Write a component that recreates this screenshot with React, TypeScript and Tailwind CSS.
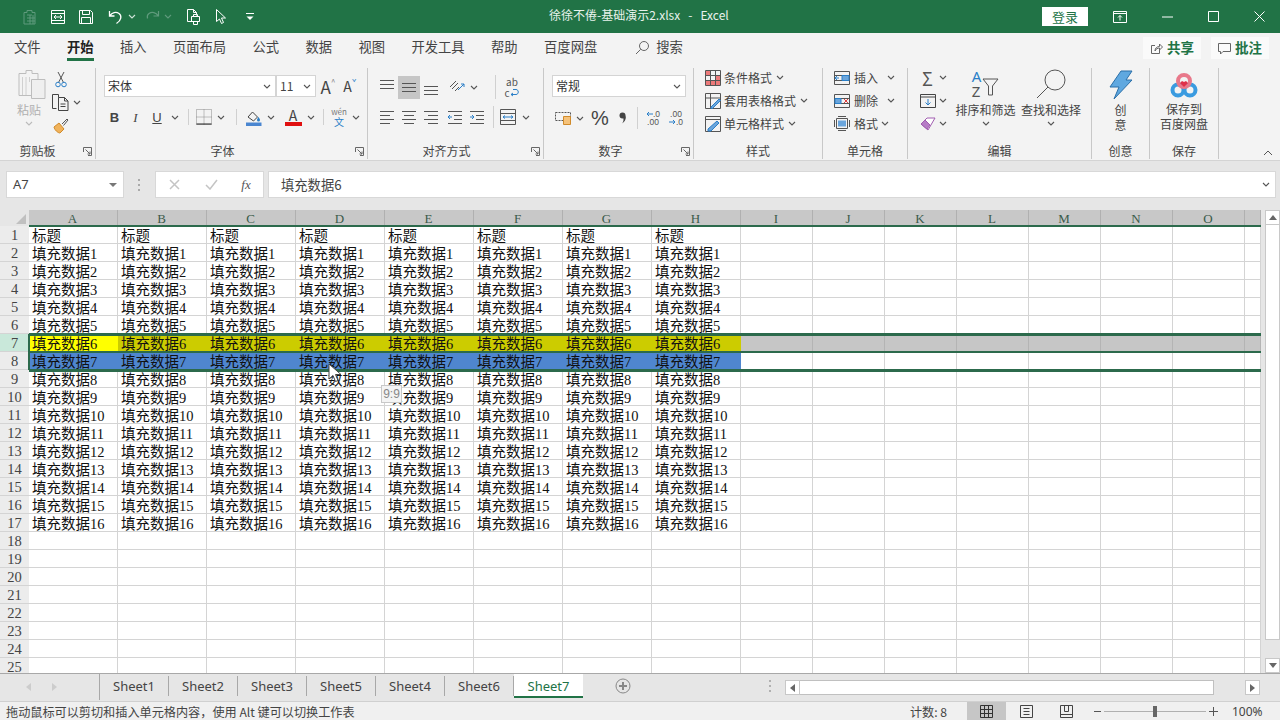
import React from "react";

const UI = { fontFamily: '"Noto Sans CJK SC","Noto Sans",sans-serif' };
const CELL = { fontFamily: '"Liberation Serif","Noto Sans CJK SC",serif' };

function Chev({ c = "#555" }: { c?: string }) {
  return (
    <svg width="8" height="5" viewBox="0 0 8 5" fill="none" stroke={c} strokeWidth="1.1">
      <path d="M1 1l3 3 3-3" />
    </svg>
  );
}

function Launcher() {
  return (
    <svg width="9" height="9" viewBox="0 0 9 9" fill="none" stroke="#666" strokeWidth="1">
      <path d="M.5 5V.5H8.5V8.5H5" />
      <path d="M2.5 2.5L7 7M7 4.5V7H4.5" />
    </svg>
  );
}

function Lines({ kind }: { kind: "top" | "mid" | "bot" | "l" | "c" | "r" | "in" | "out" }) {
  const y = kind === "top" ? [2, 6, 10] : kind === "mid" ? [5, 9, 13] : kind === "bot" ? [8, 12, 16] : [3, 7, 11, 15];
  const v = (i: number) => {
    if (kind === "l") return i % 2 ? [2, 12] : [2, 16];
    if (kind === "c") return i % 2 ? [4, 14] : [2, 16];
    if (kind === "r") return i % 2 ? [6, 16] : [2, 16];
    if (kind === "in" || kind === "out") return i === 1 || i === 2 ? [8, 16] : [2, 16];
    return [2, 16];
  };
  return (
    <svg width="18" height="18" viewBox="0 0 18 18" fill="none">
      {y.map((yy, i) => (
        <path key={yy} d={`M${v(i)[0]} ${yy + 0.5}H${v(i)[1]}`} stroke={"#555"} strokeWidth="1" />
      ))}
      {kind === "in" && <path d="M6 9H2M4 7L2 9l2 2" stroke="#2a7fc8" strokeWidth="1" />}
      {kind === "out" && <path d="M2 9h4M4 7l2 2-2 2" stroke="#2a7fc8" strokeWidth="1" />}
    </svg>
  );
}

function GroupLabel({ text, launcher, pr }: { text: string; launcher?: boolean; pr?: string }) {
  return (
    <div className={`relative h-[16px] flex items-center justify-center text-[12px] leading-none text-[#444] ${pr || ""}`}>
      <span>{text}</span>
      {launcher && (
        <span className="absolute right-[3px] top-[4px] flex">
          <Launcher />
        </span>
      )}
    </div>
  );
}

function Group({ w, children, label, launcher, pr }: { w: string; children: React.ReactNode; label: string; launcher?: boolean; pr?: string }) {
  return (
    <div className={`${w} shrink-0 flex flex-col border-r border-[#c8c8c8] mt-[3px] mb-[1px]`}>
      <div className="flex-1 flex min-h-0">{children}</div>
      <GroupLabel text={label} launcher={launcher} pr={pr} />
    </div>
  );
}

function Box({ w, children }: { w: string; children?: React.ReactNode }) {
  return <div className={`${w} shrink-0 h-full flex items-center justify-center`}>{children}</div>;
}

function Sep() {
  return <div className="w-px h-[16px] bg-[#d0d0d0] shrink-0" />;
}

function TitleBar() {
  return (
    <div className="h-[33px] shrink-0 bg-[#217346] flex items-center text-white relative">
      <div className="flex items-center h-full pl-[22px]">
        <Box w="w-[16px]">
          <svg width="16" height="16" viewBox="0 0 16 16" fill="none" stroke="#5f9a7c" strokeWidth="1">
            <path d="M2 3.5h3v-2h5v2h3V15H2zM5 6h5M5 9h8M5 12h8M8 6v9M11 6v9" />
          </svg>
        </Box>
        <div className="w-[12px]" />
        <Box w="w-[16px]">
          <svg width="16" height="16" viewBox="0 0 16 16" fill="none" stroke="#fff" strokeWidth="1">
            <path d="M1.5 1.5h13v13h-13zM1.5 4.5h13M1.5 11.5h13M4 8h8M4 8l2-2M4 8l2 2M12 8l-2-2M12 8l-2 2" />
          </svg>
        </Box>
        <div className="w-[12px]" />
        <Box w="w-[16px]">
          <svg width="16" height="16" viewBox="0 0 16 16" fill="none" stroke="#fff" strokeWidth="1">
            <path d="M1.5 1.5h11l2 2v11h-13zM4.5 1.5v4h7v-4M3.5 14.5v-6h9v6" />
          </svg>
        </Box>
        <div className="w-[14px]" />
        <Box w="w-[16px]">
          <svg width="16" height="16" viewBox="0 0 16 16" fill="none" stroke="#fff" strokeWidth="1.3">
            <path d="M1.5 2v5h5M1.8 6.8C4 3.5 8 2.5 11 4.5c3 2.2 2.5 6.500-2.500 10" />
          </svg>
        </Box>
        <Box w="w-[15px]">
          <Chev c="#cfe3d8" />
        </Box>
        <div className="w-[5px]" />
        <Box w="w-[16px]">
          <svg width="16" height="16" viewBox="0 0 16 16" fill="none" stroke="#5f9a7c" strokeWidth="1.2">
            <path d="M14.5 2v5h-5M14.2 6.8C12 3.5 8 2.5 5 4.5c-1.5 1-2 3-1.5 5" />
          </svg>
        </Box>
        <Box w="w-[15px]">
          <Chev c="#5f9a7c" />
        </Box>
        <div className="w-[10px]" />
        <Box w="w-[16px]">
          <svg width="16" height="18" viewBox="0 0 16 18" fill="none" stroke="#fff" strokeWidth="1">
            <path d="M8 13.5H2.5V1.5h6l3 3v3M8.5 1.5v3h3M6.5 8.5h8v5h-8zM8.5 8.5v-2h4v2M8.5 13.5v3h4v-3" />
          </svg>
        </Box>
        <div className="w-[12px]" />
        <Box w="w-[16px]">
          <svg width="14" height="18" viewBox="0 0 14 18" fill="none" stroke="#fff" strokeWidth="1">
            <path d="M2.5 1.5v12l3-2.5 2 4.5 2-1-2-4.5h4z" />
          </svg>
        </Box>
        <div className="w-[13px]" />
        <Box w="w-[16px]">
          <svg width="10" height="9" viewBox="0 0 10 9" fill="none" stroke="#fff" strokeWidth="1">
            <path d="M1 1.5h8" />
            <path d="M1.5 4.5h7L5 8z" fill="#fff" stroke="none" />
          </svg>
        </Box>
      </div>
      <div className="absolute left-[549px] top-[6px] text-[12px] leading-[18px] text-[#e8f2ec] whitespace-pre">徐徐不倦-基础演示2.xlsx   -   Excel</div>
      <div className="ml-auto flex items-center h-full">
        <div className="w-[46px] h-[19px] bg-white text-[#217346] text-[13px] leading-[19px] text-center">登录</div>
        <Box w="w-[22px]" />
        <Box w="w-[20px]">
          <svg width="14" height="12" viewBox="0 0 14 12" fill="none" stroke="#fff" strokeWidth="1">
            <path d="M.5 .5h13v11H.5zM.5 2.5h13M7 9.5V4.5M5 6.5l2-2 2 2" />
          </svg>
        </Box>
        <Box w="w-[27px]" />
        <Box w="w-[20px]">
          <svg width="11" height="2" viewBox="0 0 11 2" stroke="#fff"><path d="M0 1h11" /></svg>
        </Box>
        <Box w="w-[26px]" />
        <Box w="w-[20px]">
          <svg width="11" height="11" viewBox="0 0 11 11" fill="none" stroke="#fff"><path d="M.5 .5h10v10H.5z" /></svg>
        </Box>
        <Box w="w-[26px]" />
        <Box w="w-[20px]">
          <svg width="11" height="11" viewBox="0 0 11 11" fill="none" stroke="#fff"><path d="M.5 .5l10 10M10.5 .5l-10 10" /></svg>
        </Box>
        <div className="w-[11px]" />
      </div>
    </div>
  );
}

function TabsBar() {
  const tabs = ["文件", "开始", "插入", "页面布局", "公式", "数据", "视图", "开发工具", "帮助", "百度网盘"];
  return (
    <div className="h-[32px] shrink-0 flex items-start pl-[14px] text-[13.3px] text-[#444]">
      <div className="flex gap-[26.4px] h-[28px]">
        {tabs.map((t) => (
          <div key={t} className={`h-[28px] leading-[27px] ${t === "开始" ? "font-bold text-[#222] border-b-[3px] border-[#217346]" : ""}`}>
            {t}
          </div>
        ))}
      </div>
      <div className="ml-[38px] h-[28px] flex items-center">
        <svg width="15" height="15" viewBox="0 0 15 15" fill="none" stroke="#666" strokeWidth="1">
          <circle cx="9" cy="6" r="4.5" />
          <path d="M5.7 9.3L1 14" />
        </svg>
      </div>
      <div className="ml-[6px] leading-[27px]">搜索</div>
      <div className="ml-auto mt-[4px] flex gap-[10px] pr-[11px]">
        <div className="w-[58px] h-[22px] bg-[#fafafa] flex items-center justify-center gap-[4px] font-bold text-[#217346] text-[13.5px] leading-none">
          <svg width="13" height="13" viewBox="0 0 13 13" fill="none" stroke="#666"><path d="M5 3.5H1.5v8h8V8M5 9c0-3 2-4.5 4.5-4.5V2L12.5 5 9.500 8V6C7.500 6 6 7 5 9z" /></svg>
          <span>共享</span>
        </div>
        <div className="w-[58px] h-[22px] bg-[#fafafa] flex items-center justify-center gap-[4px] font-bold text-[#217346] text-[13.5px] leading-none">
          <svg width="13" height="13" viewBox="0 0 13 13" fill="none" stroke="#666"><path d="M.5 1.500h12v8H5L2.500 12V9.500h-2z" /></svg>
          <span>批注</span>
        </div>
      </div>
    </div>
  );
}

function ClipboardGroup() {
  return (
    <Group w="w-[96px]" label="剪贴板" launcher pr="pr-[20px]">
      <div className="w-[52px] pl-[17px] pt-[1px] flex flex-col items-start">
        <svg width="29" height="30" viewBox="0 0 29 30" fill="none" stroke="#bdbdbd" strokeWidth="1">
          <path d="M2 4.500h7V1.500h6v3h6V12" />
          <path d="M2 4.500v22h12" />
          <path d="M5.500 8v18M9 8v18M12.500 8v5" stroke="#d0d0d0" />
          <path d="M14.500 10.500h13.500v19H14.500z" fill="#efefef" />
        </svg>
        <div className="text-[12px] leading-[14px] text-[#b0b0b0] mt-[4px]">粘贴</div>
        <div className="ml-[8px] mt-[4px]"><Chev c="#bbb" /></div>
      </div>
      <div className="flex flex-col items-start">
        <div className="h-[22px] ml-[3px] flex items-center">
          <svg width="12" height="17" viewBox="0 0 12 17" fill="none" strokeWidth="1">
            <path d="M3 1l5.500 10.500M9 1L3.500 11.500" stroke="#555" />
            <circle cx="3" cy="13.500" r="2.300" stroke="#2a7fc8" />
            <circle cx="9" cy="13.500" r="2.300" stroke="#2a7fc8" />
          </svg>
        </div>
        <div className="h-[25px] flex items-center">
          <svg width="17" height="17" viewBox="0 0 17 17" fill="none" stroke="#444" strokeWidth="1">
            <path d="M4.500 14.500H.5V.5h6v3" />
            <path d="M6.500 3.500h6l3.500 3.500v9.500H6.500zM12.500 3.500V7h3.500M8.500 10h5M8.500 12.500h5" />
          </svg>
          <span className="ml-[4px]"><Chev /></span>
        </div>
        <div className="h-[22px] ml-[1px] flex items-center">
          <svg width="16" height="16" viewBox="0 0 16 16" fill="none">
            <path d="M1 9l5-4 5 6-4 4C5 15 1.500 12 1 9z" fill="#f0b25a" stroke="#d08a2a" />
            <path d="M9 6l5-5 1 1-4.500 5.500" stroke="#555" />
          </svg>
        </div>
      </div>
    </Group>
  );
}

function Select({ w, text, mono }: { w: string; text: string; mono?: boolean }) {
  return (
    <div className={`${w} h-[22px] shrink-0 bg-white border border-[#d4d4d4] flex items-center pl-[3px] pr-[4px] text-[12px] ${mono ? "text-[#444]" : "text-[#333]"}`}>
      <span className="flex-1 leading-none">{text}</span>
      <Chev />
    </div>
  );
}

function FontGroup() {
  return (
    <Group w="w-[272px]" label="字体" launcher pr="pr-[18px]">
      <div className="flex flex-col">
        <div className="flex items-center h-[22px] mt-[7px] pl-[8px]">
          <Select w="w-[172px]" text="宋体" />
          <Select w="w-[40px]" text="11" mono />
          <div className="w-[24px] flex justify-center items-start text-[17px] leading-none text-[#444]">A<span className="text-[8px] leading-none text-[#888]">^</span></div>
          <div className="w-[20px] flex justify-center items-start text-[14px] leading-none text-[#444]">A<span className="text-[8px] leading-none text-[#2a7fc8]">ˇ</span></div>
        </div>
        <div className="flex items-center h-[22px] mt-[9px] pl-[8px] text-[#444]">
          <Box w="w-[21px]"><span className="text-[13px] font-bold leading-none" style={{ fontFamily: '"Liberation Sans",sans-serif' }}>B</span></Box>
          <Box w="w-[21px]"><span className="text-[13px] italic leading-none" style={{ fontFamily: '"Liberation Serif",serif' }}>I</span></Box>
          <Box w="w-[22px]"><span className="text-[13px] underline leading-none" style={{ fontFamily: '"Liberation Sans",sans-serif' }}>U</span></Box>
          <Box w="w-[14px]"><Chev /></Box>
          <Box w="w-[13px]"><Sep /></Box>
          <Box w="w-[18px]">
            <svg width="16" height="16" viewBox="0 0 16 16" fill="none" stroke="#888" strokeDasharray="1 1">
              <path d="M.5 .5h15v15H.5zM8 .5v15M.5 8h15" />
              <path d="M.5 15h15" stroke="#222" strokeDasharray="none" />
            </svg>
          </Box>
          <Box w="w-[16px]"><Chev /></Box>
          <Box w="w-[14px]"><Sep /></Box>
          <Box w="w-[20px]">
            <svg width="17" height="17" viewBox="0 0 17 17" fill="none">
              <path d="M3 8l4.500-5 5 5-4 4z" stroke="#444" />
              <path d="M13.500 8s1.500 2 1.500 3a1.500 1.500 0 01-3 0c0-1 1.500-3 1.500-3z" fill="#2a7fc8" />
              <path d="M1 13.500h15.500V17H1z" fill="#4a86d0" />
            </svg>
          </Box>
          <Box w="w-[15px]"><Chev /></Box>
          <div className="w-[5px]" />
          <Box w="w-[20px]">
            <div className="flex flex-col items-center">
              <span className="text-[14px] leading-[13px] text-[#444]">A</span>
              <div className="w-[17px] h-[4px] bg-[#e01010]" />
            </div>
          </Box>
          <Box w="w-[15px]"><Chev /></Box>
          <Box w="w-[11px]"><Sep /></Box>
          <Box w="w-[20px]">
            <div className="flex flex-col items-center leading-none text-[#777]">
              <span className="text-[8px] leading-[8px]">wén</span>
              <span className="text-[10px] leading-[11px] text-[#2a7fc8]">文</span>
            </div>
          </Box>
          <Box w="w-[14px]"><Chev /></Box>
        </div>
      </div>
    </Group>
  );
}

function AlignGroup() {
  return (
    <Group w="w-[176px]" label="对齐方式" launcher pr="pr-[18px]">
      <div className="flex flex-col pl-[8px]">
        <div className="flex items-center h-[24px] mt-[7px]">
          <Box w="w-[22px]"><Lines kind="top" /></Box>
          <div className="w-[22px] h-[23px] bg-[#c6c6c6] flex items-center justify-center"><Lines kind="mid" /></div>
          <Box w="w-[22px]"><Lines kind="bot" /></Box>
          <div className="w-[2px]" />
          <Box w="w-[26px]">
            <svg width="18" height="18" viewBox="0 0 18 18" fill="none" stroke="#555">
              <path d="M2 9l6-6M4 11l6-6M7 13l4-4" />
              <path d="M10 12l6-6M13 6h3v3" stroke="#2a7fc8" />
            </svg>
          </Box>
          <Box w="w-[8px]"><Chev /></Box>
          <div className="w-[17px]" />
          <div className="w-px h-[24px] bg-[#d0d0d0] shrink-0" />
          <div className="w-[32px] flex flex-col items-center leading-none text-[#555]">
            <span className="text-[10px] leading-[11px]">ab</span>
            <div className="flex items-center h-[11px]">
              <span className="text-[10px] leading-[11px]">c</span>
              <svg width="10" height="9" viewBox="0 0 10 9" fill="none" stroke="#2a7fc8">
                <path d="M3 8L1 6.500 3 5M1 6.500h5c3 0 3-5 0-5H3" />
              </svg>
            </div>
          </div>
        </div>
        <div className="flex items-center h-[22px] mt-[7px]">
          <Box w="w-[22px]"><Lines kind="l" /></Box>
          <Box w="w-[22px]"><Lines kind="c" /></Box>
          <Box w="w-[22px]"><Lines kind="r" /></Box>
          <div className="w-[2px]" />
          <Box w="w-[22px]"><Lines kind="in" /></Box>
          <Box w="w-[22px]"><Lines kind="out" /></Box>
          <div className="w-[5px]" />
          <div className="w-px h-[22px] bg-[#d0d0d0] shrink-0" />
          <Box w="w-[28px]">
            <svg width="16" height="16" viewBox="0 0 16 16" fill="none" stroke="#555">
              <path d="M.5 .5h15v15H.5zM.5 4.500h15M.5 11.500h15" />
              <path d="M3 8h10M3 8l2-1.500M3 8l2 1.500M13 8l-2-1.500M13 8l-2 1.500" stroke="#2a7fc8" />
            </svg>
          </Box>
          <Box w="w-[8px]"><Chev /></Box>
        </div>
      </div>
    </Group>
  );
}

function Arrow({ dir }: { dir: "l" | "r" }) {
  return (
    <svg width="7" height="6" viewBox="0 0 7 6" fill="none" stroke="#2a7fc8">
      <path d={dir === "l" ? "M7 3H1M3 1L1 3l2 2" : "M0 3h6M4 1l2 2-2 2"} />
    </svg>
  );
}

function NumberGroup() {
  return (
    <Group w="w-[150px]" label="数字" launcher pr="pr-[16px]">
      <div className="flex flex-col pl-[8px]">
        <div className="mt-[7px]"><Select w="w-[134px]" text="常规" /></div>
        <div className="flex items-center h-[22px] mt-[10px] text-[#444]">
          <Box w="w-[22px]">
            <svg width="17" height="14" viewBox="0 0 17 14" fill="none" stroke="#555">
              <path d="M.5 1.500h15v8H.5z" strokeDasharray="2 1" />
              <path d="M8.500 5.500h7v8h-7z" fill="#f5c27a" stroke="#d08a2a" />
            </svg>
          </Box>
          <Box w="w-[12px]"><Chev /></Box>
          <Box w="w-[28px]"><span className="text-[20px] font-light leading-none" style={{ fontFamily: '"Liberation Sans",sans-serif' }}>%</span></Box>
          <Box w="w-[16px]">
            <svg width="7" height="12" viewBox="0 0 7 12" fill="#444">
              <circle cx="3.500" cy="3.500" r="3" />
              <path d="M4 5c2.500 0 3-1 2.800-2 .5 4-.8 7-4 8.500C4.500 9.500 5 8 4 5z" />
            </svg>
          </Box>
          <div className="w-[7px]" />
          <div className="w-px h-[22px] bg-[#d0d0d0] shrink-0" />
          <div className="w-[3px]" />
          <div className="w-[24px] flex flex-col items-center text-[8.500px] leading-[8.500px] text-[#555]" style={{ fontFamily: '"Liberation Sans",sans-serif' }}>
            <div className="flex items-center"><Arrow dir="l" /><span>.0</span></div>
            <span>.00</span>
          </div>
          <div className="w-[22px] flex flex-col items-center text-[8.500px] leading-[8.500px] text-[#555]" style={{ fontFamily: '"Liberation Sans",sans-serif' }}>
            <span>.00</span>
            <div className="flex items-center"><Arrow dir="r" /><span>.0</span></div>
          </div>
        </div>
      </div>
    </Group>
  );
}

function StyleGroup() {
  const Row = ({ icon, text }: { icon: React.ReactNode; text: string }) => (
    <div className="h-[23px] flex items-center text-[12px] text-[#444] leading-none">
      <span className="w-[19px] flex">{icon}</span>
      <span>{text}</span>
      <span className="ml-[4px] flex"><Chev /></span>
    </div>
  );
  return (
    <Group w="w-[129px]" label="样式">
      <div className="pl-[11px] -mt-[2px] flex flex-col">
        <Row
          text="条件格式"
          icon={
            <svg width="16" height="16" viewBox="0 0 16 16" fill="none" stroke="#555">
              <path d="M.5 .5h15v15H.5z" />
              <path d="M1 1h4.500v4.500H1zM10.500 5.500H15V10h-4.500zM1 10.500h14V15H1z" fill="#ec7a7a" stroke="none" />
              <path d="M5.500 .5v15M10.500 .5v15M.5 5.500h15M.5 10.500h15" />
            </svg>
          }
        />
        <Row
          text="套用表格格式"
          icon={
            <svg width="16" height="16" viewBox="0 0 16 16" fill="none" stroke="#555">
              <path d="M.5 .5h15v15H.5zM.5 5h15M5.500 .5v15" />
              <path d="M6 14l8-8 1.500 1.500-8 8H6z" fill="#6aa5dc" stroke="#2a7fc8" />
            </svg>
          }
        />
        <Row
          text="单元格样式"
          icon={
            <svg width="16" height="16" viewBox="0 0 16 16" fill="none" stroke="#555">
              <path d="M.5 .5h15v15H.5zM.5 3.500h15" />
              <path d="M3 13l9-8 2 2-8 8H3z" fill="#6aa5dc" stroke="#2a7fc8" />
            </svg>
          }
        />
      </div>
    </Group>
  );
}

function CellsGroup() {
  const Row = ({ icon, text, gap }: { icon: React.ReactNode; text: string; gap: string }) => (
    <div className="h-[23px] flex items-center text-[12px] text-[#444] leading-none">
      <span className="w-[20px] flex">{icon}</span>
      <span>{text}</span>
      <span className={`${gap} flex`}><Chev /></span>
    </div>
  );
  const Ins = (
    <svg width="16" height="14" viewBox="0 0 16 14" fill="none" stroke="#2a7fc8">
      <path d="M.5 .5h15v13H.5zM.5 4.500h15M.5 9.500h15" stroke="#555" />
      <path d="M8 4.500h7v5H8z" fill="#6aa5dc" stroke="#2a7fc8" />
      <path d="M5 7H1M3 5L1 7l2 2" />
    </svg>
  );
  const Del = (
    <svg width="16" height="14" viewBox="0 0 16 14" fill="none" stroke="#555">
      <path d="M.5 .5h15v13H.5zM.5 4.500h15M.5 9.500h15" />
      <path d="M1 4.500h6v5H1z" fill="#6aa5dc" stroke="#2a7fc8" />
      <path d="M10 5l4 4M14 5l-4 4" stroke="#e04040" />
    </svg>
  );
  const Fmt = (
    <svg width="16" height="15" viewBox="0 0 16 15" fill="none" stroke="#555">
      <path d="M2.500 2.500h11v10h-11z" />
      <path d="M.5 4v7M15.500 4v7M4 .5h8M4 14.500h8" />
      <path d="M4 4.500h8v6H4z" fill="#6aa5dc" stroke="none" />
    </svg>
  );
  return (
    <Group w="w-[85px]" label="单元格">
      <div className="pl-[11px] -mt-[2px] flex flex-col">
        <Row text="插入" icon={Ins} gap="ml-[9px]" />
        <Row text="删除" icon={Del} gap="ml-[9px]" />
        <Row text="格式" icon={Fmt} gap="ml-[3px]" />
      </div>
    </Group>
  );
}

function EditGroup() {
  return (
    <Group w="w-[184px]" label="编辑">
      <div className="w-[45px] pl-[8px] -mt-[2px] flex flex-col">
        <div className="h-[23px] flex items-center">
          <span className="w-[23px] flex justify-center text-[18px] leading-none text-[#555]">Σ</span>
          <Chev />
        </div>
        <div className="h-[23px] flex items-center">
          <span className="w-[23px] flex justify-center">
            <svg width="16" height="14" viewBox="0 0 16 14" fill="none" stroke="#444">
              <path d="M.5 .5h15v13H.5zM.5 3h15" />
              <path d="M8 5v6M5.500 8.500L8 11l2.500-2.500" stroke="#2a7fc8" />
            </svg>
          </span>
          <Chev />
        </div>
        <div className="h-[23px] flex items-center">
          <span className="w-[23px] flex justify-center">
            <svg width="16" height="15" viewBox="0 0 16 15" fill="none" stroke="#a05cb0">
              <path d="M1 8l6-6 8 0-7 12z" fill="#fff" />
              <path d="M1 8l4-4 5 5-3 4z" fill="#b67cc6" />
            </svg>
          </span>
          <Chev />
        </div>
      </div>
      <div className="w-[65px] flex flex-col items-center pt-[1px]">
        <div className="h-[30px] flex items-start">
          <div className="flex flex-col text-[15px] leading-[15px]" style={{ fontFamily: '"Noto Sans",sans-serif' }}>
            <span className="text-[#2a7fc8]">A</span>
            <span className="text-[#555]">Z</span>
          </div>
          <svg width="17" height="18" viewBox="0 0 17 18" fill="none" stroke="#555" className="mt-[9px] ml-[1px]">
            <path d="M1 1h15l-5.500 7v9h-4V8z" />
          </svg>
        </div>
        <div className="text-[12px] leading-[14px] text-[#444] mt-[4px] whitespace-nowrap">排序和筛选</div>
        <div className="mt-[4px]"><Chev /></div>
      </div>
      <div className="w-[66px] flex flex-col items-center pt-[1px]">
        <svg width="32" height="30" viewBox="0 0 32 30" fill="none" stroke="#555">
          <circle cx="20" cy="11" r="10" />
          <path d="M13 18L2 29" />
        </svg>
        <div className="text-[12px] leading-[14px] text-[#444] mt-[4px] whitespace-nowrap">查找和选择</div>
        <div className="mt-[4px]"><Chev /></div>
      </div>
    </Group>
  );
}

function IdeaGroup() {
  return (
    <Group w="w-[58px]" label="创意">
      <div className="w-full flex flex-col items-center pt-[2px]">
        <svg width="24" height="30" viewBox="0 0 24 30" fill="none">
          <path d="M12 1h11l-6 9h6L5 29l5-12H1z" fill="#5fa8e0" stroke="#2a6fa8" />
        </svg>
        <div className="text-[12px] leading-[15px] text-[#444] mt-[2px] text-center">创<br />意</div>
      </div>
    </Group>
  );
}

function SaveGroup() {
  return (
    <Group w="w-[69px]" label="保存">
      <div className="w-full flex flex-col items-center pt-[5px]">
        <svg width="28" height="26" viewBox="0 0 28 26" fill="none">
          <circle cx="8" cy="17" r="5.500" stroke="#3a9be0" strokeWidth="4" />
          <circle cx="20" cy="17" r="5.500" stroke="#3a9be0" strokeWidth="4" />
          <circle cx="14" cy="8" r="6" stroke="#e8788a" strokeWidth="4" />
          <path d="M14 14l-4-4 2-2 2 1 2-1 2 2z" fill="#e0304a" />
        </svg>
        <div className="text-[12px] leading-[15px] text-[#444] mt-[2px] text-center whitespace-nowrap">保存到<br />百度网盘</div>
      </div>
    </Group>
  );
}

function Ribbon() {
  return (
    <div className="h-[96px] shrink-0 flex border-b border-[#d4d4d4]">
      <ClipboardGroup />
      <FontGroup />
      <AlignGroup />
      <NumberGroup />
      <StyleGroup />
      <CellsGroup />
      <EditGroup />
      <IdeaGroup />
      <SaveGroup />
      <div className="flex-1 flex items-end justify-end pr-[7px] pb-[4px]">
        <svg width="10" height="6" viewBox="0 0 10 6" fill="none" stroke="#555"><path d="M1 5l4-4 4 4" /></svg>
      </div>
    </div>
  );
}

function FormulaBar() {
  return (
    <div className="h-[46px] shrink-0 bg-[#e6e6e6] flex items-start pt-[10px] pl-[6px]">
      <div className="w-[118px] h-[27px] bg-white border border-[#d8d8d8] flex items-center pl-[6px] pr-[6px] text-[13px] text-[#444]" style={{ fontFamily: '"Noto Sans",sans-serif' }}>
        <span className="flex-1">A7</span>
        <svg width="8" height="4" viewBox="0 0 8 4"><path d="M0 0h8L4 4z" fill="#777" /></svg>
      </div>
      <div className="w-[31px] h-[27px] flex items-center justify-center">
        <svg width="3" height="12" viewBox="0 0 3 12" fill="#aaa">
          <path d="M0 0h2v2H0zM0 5h2v2H0zM0 10h2v2H0z" />
        </svg>
      </div>
      <div className="w-[109px] h-[27px] bg-white border border-[#d8d8d8] flex items-center">
        <Box w="w-[37px]">
          <svg width="11" height="11" viewBox="0 0 11 11" stroke="#c4c4c4" strokeWidth="1.500"><path d="M1 1l9 9M10 1l-9 9" /></svg>
        </Box>
        <Box w="w-[36px]">
          <svg width="13" height="11" viewBox="0 0 13 11" fill="none" stroke="#c4c4c4" strokeWidth="1.500"><path d="M1 6l4 4 7-9" /></svg>
        </Box>
        <Box w="w-[34px]">
          <span className="text-[13px] italic text-[#555] leading-none" style={{ fontFamily: '"Liberation Serif",serif' }}>fx</span>
        </Box>
      </div>
      <div className="w-[4px]" />
      <div className="w-[1008px] h-[27px] bg-white border border-[#d8d8d8] flex items-center pl-[12px] pr-[5px] text-[13.300px] text-[#444]">
        <span className="flex-1">填充数据6</span>
        <Chev />
      </div>
    </div>
  );
}

const COLS = [
  ["A", 89], ["B", 89], ["C", 89], ["D", 89], ["E", 89], ["F", 89], ["G", 89], ["H", 89],
  ["I", 72], ["J", 72], ["K", 72], ["L", 72], ["M", 72], ["N", 72], ["O", 72], ["", 16],
] as [string, number][];

function cellText(r: number) {
  if (r === 1) return "标题";
  if (r <= 17) return `填充数据${r - 1}`;
  return "";
}

function GridRow({ r }: { r: number }) {
  const bg = (c: number) => {
    if (r === 7) return c === 0 ? "bg-[#ffff00]" : c < 8 ? "bg-[#cccc00]" : "bg-[#c6c6c6]";
    if (r === 8) return c < 8 ? "bg-[#4f86cf]" : "bg-white";
    return "bg-white";
  };
  const line = (c: number) => {
    if (r === 7) return c === 0 ? "border-r-[#ffff00] border-b-[#ffff00]" : c < 8 ? "border-r-[#cccc00] border-b-[#cccc00]" : "border-r-[#b4b4b4] border-b-[#c6c6c6]";
    if (r === 8 && c < 8) return "border-r-[#4f86cf] border-b-[#4f86cf]";
    return "border-r-[#d4d4d4] border-b-[#d4d4d4]";
  };
  return (
    <div className="h-[18px] flex relative">
      <div className={`w-[29px] shrink-0 text-center text-[14.500px] leading-[18px] h-[18px] text-[#444] border-b border-[#d4d4d4] ${r === 7 ? "bg-[#c9e8da]" : "bg-[#ececec]"}`} style={CELL}>
        {r}
      </div>
      {COLS.map(([n, w], c) => (
        <div
          key={n + c}
          className={`shrink-0 border-r border-b pl-[3px] text-[14.500px] leading-[20px] h-[18px] text-[#111] overflow-visible whitespace-nowrap ${bg(c)} ${line(c)}`}
          style={{ ...CELL, width: w }}
        >
          {c < 8 ? cellText(r) : ""}
        </div>
      ))}
      {r === 1 && <div className="absolute z-10 left-[29px] w-[1232px] top-[-1px] h-[2px] bg-[#2c6a4c]" />}
      {r === 7 && <div className="absolute z-10 left-[29px] w-[1232px] top-[-1px] h-[3px] bg-[#2c6a4c]" />}
      {r === 8 && <div className="absolute z-10 left-[29px] w-[1232px] top-[-1px] h-[2px] bg-[#2c6a4c]" />}
      {r === 8 && <div className="absolute z-10 left-[29px] w-[1232px] bottom-[-2px] h-[3px] bg-[#2c6a4c]" />}
      {(r === 7 || r === 8) && <div className="absolute z-10 left-[28px] top-0 w-[2px] h-[18px] bg-[#2c6a4c]" />}
    </div>
  );
}

function ScrollBtn({ d }: { d: string }) {
  return (
    <div className="w-[15px] h-[15px] bg-white border border-[#c8c8c8] flex items-center justify-center shrink-0">
      <svg width="8" height="5" viewBox="0 0 8 5"><path d={d} fill="#666" /></svg>
    </div>
  );
}

function Sheet() {
  const rows = Array.from({ length: 25 }, (_, i) => i + 1);
  return (
    <div className="flex-1 min-h-0 bg-[#e6e6e6] flex pt-[3px] relative border-b border-[#a8a8a8]">
      <div className="w-[1261px] shrink-0 overflow-hidden bg-white">
        <div className="h-[16px] flex bg-[#c8c8c8]">
          <div className="w-[29px] shrink-0 bg-[#e6e6e6] flex items-end justify-end pr-[3px] pb-[2px]">
            <svg width="10" height="10" viewBox="0 0 10 10"><path d="M10 0v10H0z" fill="#c0c0c0" /></svg>
          </div>
          {COLS.map(([n, w]) => (
            <div key={n + w} className="shrink-0 border-r border-[#b0b0b0] text-center text-[13px] leading-[18px] pr-[1px] text-[#3a5a4a]" style={{ ...CELL, width: w }}>
              {n}
            </div>
          ))}
        </div>
        {rows.map((r) => (
          <GridRow key={r} r={r} />
        ))}
      </div>
      <div className="ml-[4px] w-[15px] flex flex-col">
        <ScrollBtn d="M0 5L4 0l4 5z" />
        <div className="h-[415px] bg-white border-x border-b border-[#c8c8c8]" />
        <div className="flex-1" />
        <ScrollBtn d="M0 0l4 5 4-5z" />
      </div>
      <div className="absolute z-20 left-[381px] top-[178px] w-[21px] h-[18px] bg-[#f4f4f4] border border-[#c8c8c8] text-[12px] leading-[16px] text-center text-[#888]" style={{ fontFamily: '"Liberation Sans",sans-serif' }}>9:9</div>
      <svg className="absolute z-20 left-[328px] top-[156px]" width="14" height="20" viewBox="0 0 14 20">
        <path d="M1 1v15l4-3.500 2.500 6 2.500-1-2.500-6H13z" fill="#fff" stroke="#444" strokeWidth="1" />
      </svg>
    </div>
  );
}

function ScrollH({ d }: { d: string }) {
  return (
    <div className="w-[15px] h-[15px] bg-white border border-[#c8c8c8] flex items-center justify-center shrink-0">
      <svg width="5" height="8" viewBox="0 0 5 8"><path d={d} fill="#666" /></svg>
    </div>
  );
}

function SheetTabs() {
  const names = ["Sheet1", "Sheet2", "Sheet3", "Sheet5", "Sheet4", "Sheet6"];
  return (
    <div className="h-[28px] shrink-0 bg-[#e6e6e6] flex items-start text-[13px] text-[#444] border-b border-[#d0d0d0]" style={{ fontFamily: '"Noto Sans",sans-serif' }}>
      <div className="w-[100px] h-[26px] flex items-center shrink-0 pl-[26px] gap-[21px] border-r border-[#a8a8a8]">
        <svg width="5" height="8" viewBox="0 0 5 8"><path d="M5 0v8L0 4z" fill="#ccc" /></svg>
        <svg width="5" height="8" viewBox="0 0 5 8"><path d="M0 0v8l5-4z" fill="#ccc" /></svg>
      </div>
      {names.map((n) => (
        <div key={n} className="w-[69px] h-[20px] mt-[2px] shrink-0 text-center leading-[20px] border-r border-[#a8a8a8]">{n}</div>
      ))}
      <div className="w-[69px] h-[24px] bg-white shrink-0 text-center leading-[24px] text-[#217346] border-b-2 border-[#217346]">Sheet7</div>
      <div className="ml-[32px] w-[18px] h-[24px] flex items-center">
        <svg width="16" height="16" viewBox="0 0 16 16" fill="none" stroke="#888">
          <circle cx="8" cy="8" r="7" />
          <path d="M8 4v8M4 8h8" strokeWidth="2" />
        </svg>
      </div>
      <div className="ml-[136px] h-[24px] flex items-center">
        <svg width="3" height="13" viewBox="0 0 3 13" fill="#b0b0b0"><path d="M0 0h2v2H0zM0 5h2v2H0zM0 10h2v2H0z" /></svg>
      </div>
      <div className="ml-[13px] mt-[6px] w-[475px] h-[15px] flex">
        <ScrollH d="M5 0v8L0 4z" />
        <div className="w-[414px] bg-white border-y border-r border-[#c0c0c0]" />
        <div className="flex-1" />
        <ScrollH d="M0 0v8l5-4z" />
      </div>
    </div>
  );
}

function StatusBar() {
  return (
    <div className="h-[18px] shrink-0 bg-[#f0f0f0] flex items-center pl-[6px] text-[12.150px] leading-none text-[#444]">
      <span className="whitespace-pre pt-[2px]">拖动鼠标可以剪切和插入单元格内容，使用 Alt 键可以切换工作表</span>
      <span className="ml-auto pt-[2px]">计数: 8</span>
      <div className="ml-[20px] w-[39px] h-[18px] bg-[#c6c6c6] flex items-center justify-center">
        <svg width="13" height="13" viewBox="0 0 13 13" fill="none" stroke="#333"><path d="M.5 .5h12v12H.5zM4.500 .5v12M8.500 .5v12M.5 4.500h12M.5 8.500h12" /></svg>
      </div>
      <Box w="w-[40px]">
        <svg width="13" height="13" viewBox="0 0 13 13" fill="none" stroke="#444"><path d="M.5 .5h12v12H.5zM3.500 3.500h6M3.500 6.500h6M3.500 9.500h6" /></svg>
      </Box>
      <Box w="w-[40px]">
        <svg width="13" height="13" viewBox="0 0 13 13" fill="none" stroke="#444"><path d="M.5 .5h12v12H.5zM4.500 .5v6h4v-6M.5 9.500h12" /></svg>
      </Box>
      <div className="w-[4px]" />
      <Box w="w-[14px]"><div className="w-[7px] h-px bg-[#555]" /></Box>
      <div className="w-[102px] h-[18px] flex items-center relative">
        <div className="h-px w-full bg-[#b0b0b0]" />
        <div className="absolute left-[49px] top-[4px] w-[4px] h-[11px] bg-[#666]" />
      </div>
      <Box w="w-[14px]">
        <svg width="9" height="9" viewBox="0 0 9 9" stroke="#555"><path d="M0 4.500h9M4.500 0v9" /></svg>
      </Box>
      <span className="ml-[12px] mr-[18px] w-[30px] whitespace-nowrap pt-[2px] text-[12px]" style={{ fontFamily: '"Noto Sans",sans-serif' }}>100%</span>
    </div>
  );
}

export default function App() {
  return (
    <div className="w-[1280px] h-[720px] overflow-hidden flex flex-col bg-[#f3f3f3]" style={UI}>
      <TitleBar />
      <TabsBar />
      <Ribbon />
      <FormulaBar />
      <Sheet />
      <SheetTabs />
      <StatusBar />
    </div>
  );
}
